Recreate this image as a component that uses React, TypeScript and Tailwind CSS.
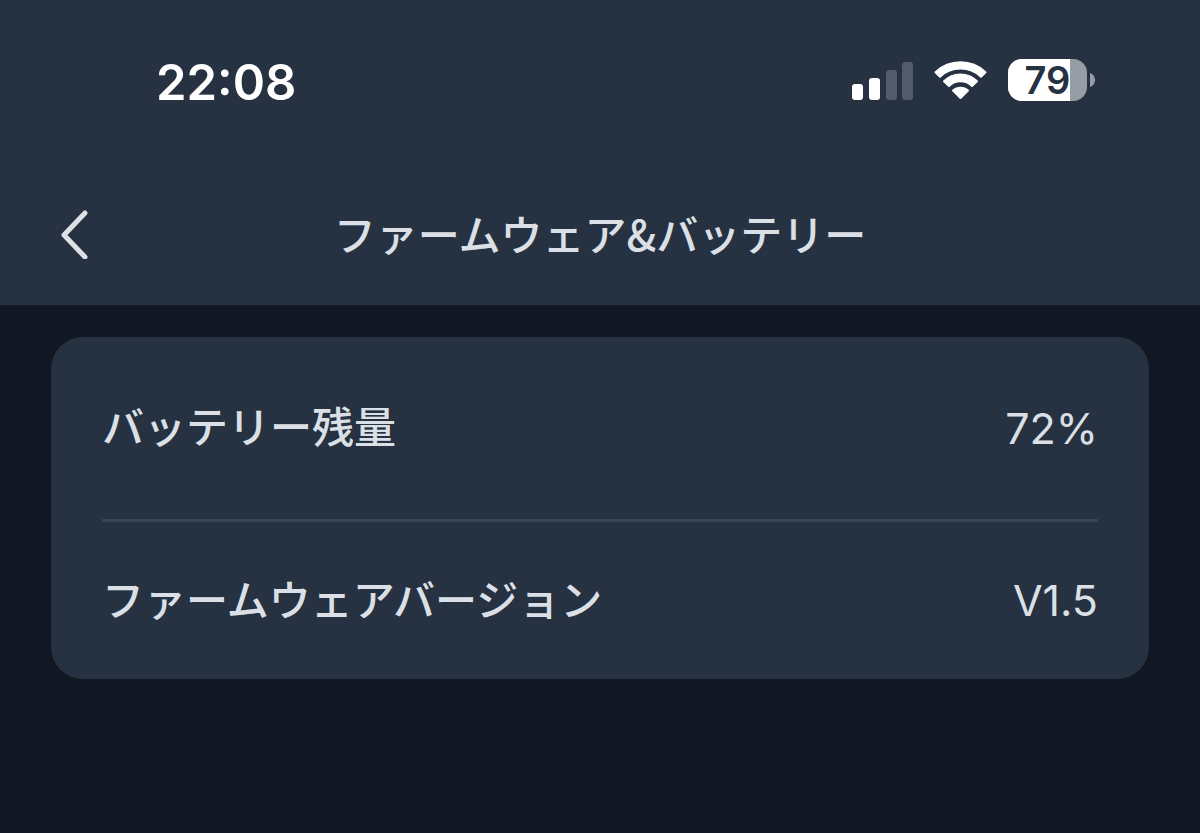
import type { ReactNode } from 'react';

interface InfoRowProps {
  label: string;
  value: string;
  className?: string;
}

function SignalIcon() {
  return (
    <svg width="62" height="40" viewBox="0 0 62 40" role="img" aria-label="Signal">
      <rect x="0" y="24" width="11" height="16" rx="3" fill="#ffffff" />
      <rect x="17" y="18" width="11" height="22" rx="3" fill="#ffffff" />
      <rect x="34" y="10" width="11" height="30" rx="3" fill="#515b69" />
      <rect x="50" y="2" width="11" height="38" rx="3" fill="#515b69" />
    </svg>
  );
}

function WifiIcon() {
  return (
    <svg width="54" height="40" viewBox="0 0 54 40" fill="#ffffff" stroke="#ffffff" strokeWidth="2" strokeLinejoin="round" role="img" aria-label="Wi-Fi">
      <path d="M1.5 12.2A36.5 36.5 0 0 1 51.5 12.2L47 16.7A30 30 0 0 0 6 16.7Z" />
      <path d="M10 21.2A23.5 23.5 0 0 1 43 21.2L38 26A16.6 16.6 0 0 0 15 26Z" />
      <path d="M19 30.6A11 11 0 0 1 34 30.6L26.5 38Z" />
    </svg>
  );
}

function BatteryIcon({ level }: { level: number }) {
  return (
    <div className="flex items-center gap-[3px]" role="img" aria-label={`Battery ${level}%`}>
      <div className="relative flex h-[42px] w-[79px] items-center justify-center rounded-[14px] bg-[#979da5]">
        <div className="absolute inset-y-0 left-0 rounded-l-[14px] bg-white" style={{ width: `${level}%` }} />
        <span className="relative text-[38px] leading-none font-semibold text-[#263141]">{level}</span>
      </div>
      <svg width="5" height="14" viewBox="0 0 5 14">
        <path d="M0 0C3 1 5 3.5 5 7S3 13 0 14Z" fill="#979da5" />
      </svg>
    </div>
  );
}

function StatusBar() {
  return (
    <div className="flex h-40 items-center justify-between pr-[105px] pl-[156px] text-white">
      <time className="pt-1 text-[49px] leading-none font-semibold">22:08</time>
      <div className="flex items-center gap-5">
        <SignalIcon />
        <WifiIcon />
        <BatteryIcon level={79} />
      </div>
    </div>
  );
}

function NavBar({ children }: { children: ReactNode }) {
  return (
    <div className="grid h-[145px] grid-cols-[1fr_auto_1fr] items-center px-[58px]">
      <button type="button" aria-label="戻る" className="w-8">
        <svg width="32" height="52" viewBox="0 0 32 52" fill="none" stroke="#dde1e6" strokeWidth="5" strokeLinecap="round" strokeLinejoin="round">
          <path d="M27 6L6 28L27 50" />
        </svg>
      </button>
      <h1 className="font-['Noto_Sans_CJK_JP',sans-serif] text-[42px] leading-none font-medium">{children}</h1>
    </div>
  );
}

function InfoRow({ label, value, className = '' }: InfoRowProps) {
  return (
    <div className={`flex items-center justify-between ${className}`}>
      <dt className="text-[42px] leading-none font-medium">{label}</dt>
      <dd className="text-[43px] leading-none">{value}</dd>
    </div>
  );
}

export default function App() {
  return (
    <div className="min-h-screen bg-[#111823] font-['Inter','Noto_Sans_CJK_JP',sans-serif] text-[#dbe0e6]">
      <header className="bg-[#263141]">
        <StatusBar />
        <NavBar>ファームウェア&amp;バッテリー</NavBar>
      </header>
      <main className="px-[51px] py-8">
        <dl className="rounded-[32px] bg-[#263141] px-[51px]">
          <InfoRow label="バッテリー残量" value="72%" className="h-[185px] border-b-3 border-[#384353]" />
          <InfoRow label="ファームウェアバージョン" value="V1.5" className="h-[157px]" />
        </dl>
      </main>
    </div>
  );
}
